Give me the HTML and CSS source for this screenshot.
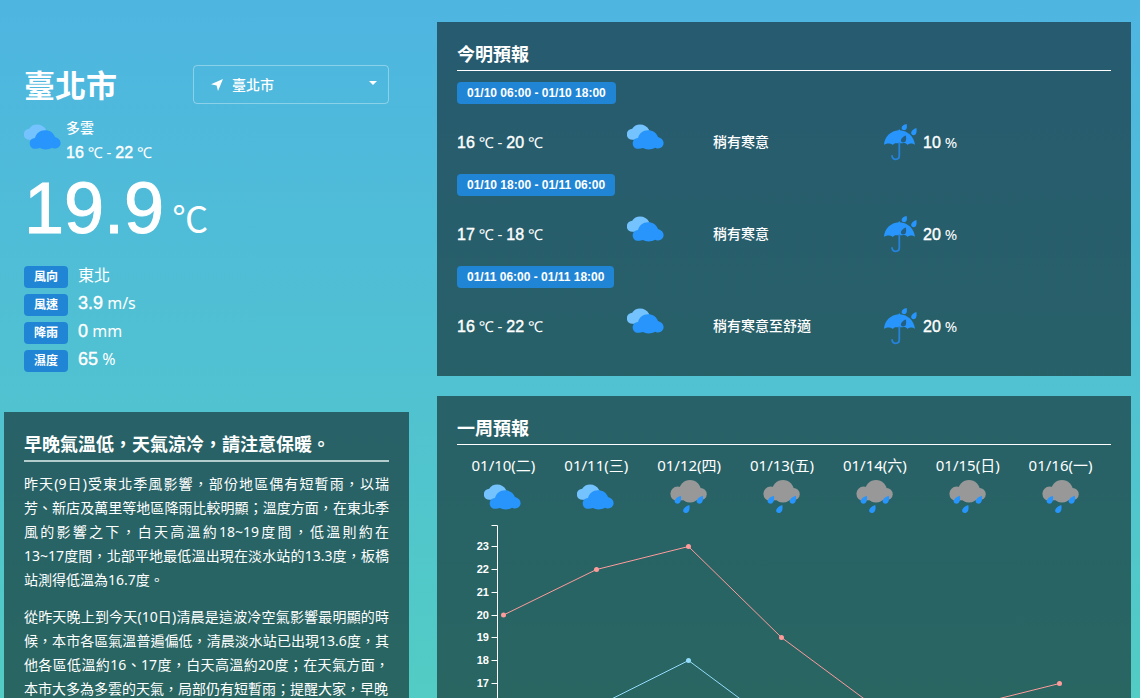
FILE: index.html
```html
<!DOCTYPE html>
<html lang="zh-Hant-TW">
<head>
<meta charset="utf-8">
<meta name="viewport" content="width=device-width, initial-scale=1">
<title>臺北市</title>
<link rel="stylesheet" href="styles.css">
</head>
<body>
<svg class="sprite" aria-hidden="true">
  <symbol id="cloudy" viewBox="1 0 38 26">
    <path fill="#74c3ff" d="M6.500 15.800C3 15.800.8 13.400.8 10.400.8 7.400 3 5 6.200 4.800 7.800 1.800 10.800.4 14 .4c4 0 7.400 1.900 9 5.400.9 1.900.9 4 .3 5.800L12 16z"/>
    <path fill="#2795fb" d="M12 24.800c-3 0-5.300-2.300-5.300-5.300 0-3.200 2.300-5.300 5.300-5.400C13 9.500 17 6.300 22 6.300c5 0 8.400 2.600 10 6.800 3.400.9 5.600 3 5.600 6 0 3.200-2.500 5.400-5.500 5.400-1.500 0-2.300-.3-3-.7-2 1.200-4.300 1.600-6.600 1.600s-4-.4-5.500-1.300c-1.300.6-3 .7-5 .7z"/>
  </symbol>
  <symbol id="rain" viewBox="0 0 38 36">
    <g fill="#989898"><circle cx="7.600" cy="14.800" r="7.200"/><circle cx="20" cy="12" r="11"/><circle cx="30.500" cy="15.200" r="6.200"/><ellipse cx="20" cy="19" rx="7" ry="4.600"/><path d="M8 12h22v9.300H8z"/></g>
    <g fill="#2795fb"><path d="M10.800 16.800c.7 3.400.2 8-3.500 8-4.600-.5-3.200-5.800 3.500-8z"/><path d="M32.800 16.800c.7 3.400.2 8-3.500 8-4.600-.5-3.200-5.800 3.500-8z"/><path d="M19.300 26c.7 3.400.2 8-3.500 8-4.600-.5-3.200-5.800 3.500-8z"/></g>
  </symbol>
  <symbol id="umbrella" viewBox="0 0 34 40">
    <path fill="#2795fb" d="M0 23C.3 14.500 7 8.800 14.600 8.300c0-1.500 1.400-1.500 1.400 0C23.600 8.800 30.300 14.500 31 23c-1.700-2-6-2-7.500 0-1.300-1.800-3.200-2.300-4.800-1.800h-6c-1.500-.3-2.800.3-3.900 1.800C7 21 2 21 0 23z"/>
    <path fill="none" stroke="#2583dc" stroke-width="1.800" stroke-linecap="round" d="M15.300 21v12.500c0 5-7.200 5-7.200.5"/>
    <g fill="#2795fb"><path d="M22.600 2c.8 3 .3 6.200-2.600 6.200-4-.4-3-5.200 2.600-6.200z"/><path d="M32.400 6c.6 4 0 7.200-3 7.200-4-.4-2.500-5.800 3-7.200z"/></g>
    <path fill="#245f82" d="M21.800 13.500c.8 4.200.3 7-2.600 7-4-.4-2.600-5 2.600-7z"/>
  </symbol>
</svg>

<main class="page">
  <div class="column">
    <section class="current">
      <header class="current-head">
        <h1 class="city">臺北市</h1>
        <div class="picker">
          <svg class="picker-pin" viewBox="0 0 12 12" aria-hidden="true"><path fill="#fff" d="M12 0 7 12 5.600 6.500 0 5.200z"/></svg>
          <select class="picker-select" aria-label="縣市"><option>臺北市</option></select>
          <svg class="picker-caret" viewBox="0 0 8 4" aria-hidden="true"><path fill="#fff" d="M0 0h8L4 4z"/></svg>
        </div>
      </header>
      <div class="summary">
        <svg class="icon-cloudy" aria-hidden="true"><use href="#cloudy"/></svg>
        <div>
          <p class="condition">多雲</p>
          <p class="range"><b class="num">16</b> ℃ - <b class="num">22</b> ℃</p>
        </div>
      </div>
      <p class="temperature"><span>19.9</span><span class="temperature-unit">℃</span></p>
      <dl class="stats">
        <div class="stat"><dt class="tag">風向</dt><dd class="stat-value">東北</dd></div>
        <div class="stat"><dt class="tag">風速</dt><dd class="stat-value"><b class="num">3.9</b> m/s</dd></div>
        <div class="stat"><dt class="tag">降雨</dt><dd class="stat-value"><b class="num">0</b> mm</dd></div>
        <div class="stat"><dt class="tag">濕度</dt><dd class="stat-value"><b class="num">65</b> %</dd></div>
      </dl>
    </section>
    <article class="panel bulletin">
      <h2 class="panel-title bulletin-title">早晚氣溫低，天氣涼冷，請注意保暖。</h2>
      <p class="bulletin-text">昨天(9日)受東北季風影響，部份地區偶有短暫雨，以瑞芳、新店及萬里等地區降雨比較明顯；溫度方面，在東北季風的影響之下，白天高溫約18~19度間，低溫則約在<span class="keep">13~17度間</span>，北部平地最低溫出現在淡水站的13.3度，板橋站測得低溫為16.7度。</p>
      <p class="bulletin-text">從昨天晚上到今天(10日)清晨是這波冷空氣影響最明顯的時候，本市各區氣溫普遍偏低，清晨淡水站已出現13.6度，其他各區低溫約16、17度，白天高溫約20度；在天氣方面，本市大多為多雲的天氣，局部仍有短暫雨；提醒大家，早晚</p>
    </article>
  </div>

  <div class="column forecasts">
    <section class="panel">
      <h2 class="panel-title">今明預報</h2>
      <div class="slot">
        <h3 class="tag slot-time">01/10 06:00 - 01/10 18:00</h3>
        <div class="slot-row">
          <p class="range"><b class="num">16</b> ℃ - <b class="num">20</b> ℃</p>
          <svg class="icon-cloudy slot-icon" aria-hidden="true"><use href="#cloudy"/></svg>
          <p class="comfort">稍有寒意</p>
          <p class="chance"><svg class="icon-umbrella" aria-hidden="true"><use href="#umbrella"/></svg><span><b class="num">10</b> %</span></p>
        </div>
      </div>
      <div class="slot">
        <h3 class="tag slot-time">01/10 18:00 - 01/11 06:00</h3>
        <div class="slot-row">
          <p class="range"><b class="num">17</b> ℃ - <b class="num">18</b> ℃</p>
          <svg class="icon-cloudy slot-icon" aria-hidden="true"><use href="#cloudy"/></svg>
          <p class="comfort">稍有寒意</p>
          <p class="chance"><svg class="icon-umbrella" aria-hidden="true"><use href="#umbrella"/></svg><span><b class="num">20</b> %</span></p>
        </div>
      </div>
      <div class="slot">
        <h3 class="tag slot-time">01/11 06:00 - 01/11 18:00</h3>
        <div class="slot-row">
          <p class="range"><b class="num">16</b> ℃ - <b class="num">22</b> ℃</p>
          <svg class="icon-cloudy slot-icon" aria-hidden="true"><use href="#cloudy"/></svg>
          <p class="comfort">稍有寒意至舒適</p>
          <p class="chance"><svg class="icon-umbrella" aria-hidden="true"><use href="#umbrella"/></svg><span><b class="num">20</b> %</span></p>
        </div>
      </div>
    </section>

    <section class="panel week-panel">
      <h2 class="panel-title">一周預報</h2>
      <ol class="week">
        <li class="day"><span>01/10(二)</span><span class="day-icon"><svg class="icon-cloudy"><use href="#cloudy"/></svg></span></li>
        <li class="day"><span>01/11(三)</span><span class="day-icon"><svg class="icon-cloudy"><use href="#cloudy"/></svg></span></li>
        <li class="day"><span>01/12(四)</span><span class="day-icon"><svg class="icon-rain"><use href="#rain"/></svg></span></li>
        <li class="day"><span>01/13(五)</span><span class="day-icon"><svg class="icon-rain"><use href="#rain"/></svg></span></li>
        <li class="day"><span>01/14(六)</span><span class="day-icon"><svg class="icon-rain"><use href="#rain"/></svg></span></li>
        <li class="day"><span>01/15(日)</span><span class="day-icon"><svg class="icon-rain"><use href="#rain"/></svg></span></li>
        <li class="day"><span>01/16(一)</span><span class="day-icon"><svg class="icon-rain"><use href="#rain"/></svg></span></li>
      </ol>
      <svg class="chart" viewBox="0 0 654 240" role="img" aria-label="一周氣溫">
        <path class="axis" d="M34.500 7.500h6V240M34.500 28.500h6M34.500 51.500h6M34.500 74.500h6M34.500 97.500h6M34.500 119.500h6M34.500 142.500h6M34.500 165.500h6M34.500 188.500h6M34.500 211.500h6"/>
        <g class="axis-label">
          <text x="32" y="32">23</text><text x="32" y="55">22</text><text x="32" y="78">21</text><text x="32" y="101">20</text><text x="32" y="123">19</text><text x="32" y="146">18</text><text x="32" y="169">17</text><text x="32" y="192">16</text><text x="32" y="215">15</text>
        </g>
        <polyline class="line-high" points="46.500,97 139.500,51.500 231.500,28.500 324.500,119.500 417.500,188.500 510.500,188.500 602.500,165.500"/>
        <g class="dot-high"><circle cx="46.500" cy="97" r="2.500"/><circle cx="139.500" cy="51.500" r="2.500"/><circle cx="231.500" cy="28.500" r="2.500"/><circle cx="324.500" cy="119.500" r="2.500"/><circle cx="417.500" cy="188.500" r="2.500"/><circle cx="510.500" cy="188.500" r="2.500"/><circle cx="602.500" cy="165.500" r="2.500"/></g>
        <polyline class="line-low" points="46.500,188.500 139.500,188.500 231.500,142.500 324.500,211.500 417.500,211.500 510.500,211.500 602.500,211.500"/>
        <g class="dot-low"><circle cx="46.500" cy="188.500" r="2.500"/><circle cx="139.500" cy="188.500" r="2.500"/><circle cx="231.500" cy="142.500" r="2.500"/><circle cx="324.500" cy="211.500" r="2.500"/><circle cx="417.500" cy="211.500" r="2.500"/><circle cx="510.500" cy="211.500" r="2.500"/><circle cx="602.500" cy="211.500" r="2.500"/></g>
      </svg>
    </section>
  </div>
</main>
</body>
</html>
```

FILE: styles.css
```css
* { box-sizing: border-box; }

body {
  margin: 0;
  color: #fff;
  font: 14px/24px "Noto Sans", "Noto Sans CJK TC", sans-serif;
}

h1, h2, h3, p, dl, dd, ol { margin: 0; padding: 0; }

svg { display: block; flex: none; }

.sprite { position: absolute; width: 0; height: 0; }

.page {
  display: grid;
  grid-template-columns: 405fr 694fr;
  column-gap: 28px;
  height: 100vh;
  padding: 0 9px 0 4px;
  overflow-y: auto;
  scrollbar-width: none;
  background: linear-gradient(#4eb5e1, #52ccc4);
}

.column { display: flex; flex-direction: column; min-width: 0; }
.forecasts { gap: 20px; padding-top: 22px; }

.panel { padding: 20px; background: rgba(0, 0, 0, 0.5); }

.panel-title {
  padding-bottom: 4px;
  border-bottom: 1px solid #fff;
  font-size: 18px;
  line-height: 24px;
  font-weight: 700;
}

.icon-cloudy { width: 38px; height: 26px; }
.icon-rain { width: 38px; height: 36px; }
.icon-umbrella { width: 34px; height: 40px; }

.num {
  font: 16px/16px "Liberation Sans", Arial, sans-serif;
  -webkit-text-stroke: 0.4px #fff;
}

.range, .chance { font-size: 15px; }
.condition, .comfort { font-weight: 500; }

.tag {
  border-radius: 4px;
  background: #2185d5;
  font-size: 12px;
  line-height: 22px;
  font-weight: 700;
}

/* Current conditions */
.current { padding: 65px 20px 0; }

.current-head { display: flex; align-items: center; justify-content: space-between; }
.city { font-size: 31px; line-height: 38px; font-weight: 700; }

.picker { position: relative; width: 196px; }
.picker-select {
  display: block;
  width: 100%;
  height: 39px;
  padding: 0 24px 0 38px;
  border: 1px solid rgba(255, 255, 255, 0.35);
  border-radius: 4px;
  appearance: none;
  background: transparent;
  color: #fff;
  font: 500 14px/24px "Noto Sans", "Noto Sans CJK TC", sans-serif;
}
.picker-pin { position: absolute; top: 14px; left: 18px; width: 12px; height: 12px; }
.picker-caret { position: absolute; top: 16px; right: 12px; width: 8px; height: 4px; }

.summary { display: flex; align-items: flex-start; gap: 4px; margin-top: 12px; }
.summary .icon-cloudy { margin-top: 8px; }

.temperature {
  display: flex;
  align-items: baseline;
  gap: 8px;
  margin-top: 8px;
  font: 72px/72px "Liberation Sans", Arial, sans-serif;
  -webkit-text-stroke: 1px #fff;
}
.temperature-unit {
  font: 36px/36px "Noto Sans CJK TC", sans-serif;
  -webkit-text-stroke: 0;
}

.stats { display: grid; gap: 6px; margin-top: 22px; }
.stat { display: flex; gap: 10px; height: 22px; }
.stat .tag { width: 44px; text-align: center; }
.stat-value { font-size: 16px; line-height: 18px; }
.stat-value .num { font-size: 18px; line-height: 18px; }

.bulletin { flex: 1 0 auto; margin-top: 40px; }
.bulletin-title { border-bottom: 2px solid #b3cccc; }
.bulletin-text { margin-top: 10px; text-align: justify; }
.bulletin-text + .bulletin-text { margin-top: 13px; }
.keep { white-space: nowrap; }

/* Short-term forecast */
.slot { margin: 11px 0 12px; }
.slot + .slot { margin-top: 0; }
.forecasts .panel:first-child { padding-bottom: 18px; }
.slot-time {
  width: fit-content;
  padding: 0 10px;
  font-family: "Liberation Sans", Arial, sans-serif;
}
.slot-row {
  display: grid;
  grid-template-columns: 170fr 86fr 171fr 227fr;
  align-items: center;
  height: 40px;
  margin-top: 18px;
}
.slot-icon { align-self: start; margin-top: 2px; }
.chance { display: flex; align-items: center; gap: 5px; }

/* Weekly forecast */
.week-panel { flex: 1 0 auto; }
.week {
  display: grid;
  grid-template-columns: repeat(7, 1fr);
  margin-top: 9px;
  padding-right: 4px;
  list-style: none;
}
.day { display: flex; flex-direction: column; align-items: center; font-size: 15px; line-height: 22px; }
.day-icon { display: flex; align-items: center; height: 42px; }

.chart { width: 100%; height: auto; }
.axis { fill: none; stroke: #fff; stroke-width: 1; }
.axis-label { fill: #fff; font: 700 11px "Liberation Sans", Arial, sans-serif; text-anchor: end; }
.line-high, .line-low { fill: none; stroke-width: 1; }
.line-high { stroke: #ff9b9b; }
.line-low { stroke: #93dcfb; }
.dot-high { fill: #ff9b9b; }
.dot-low { fill: #93dcfb; }
```
